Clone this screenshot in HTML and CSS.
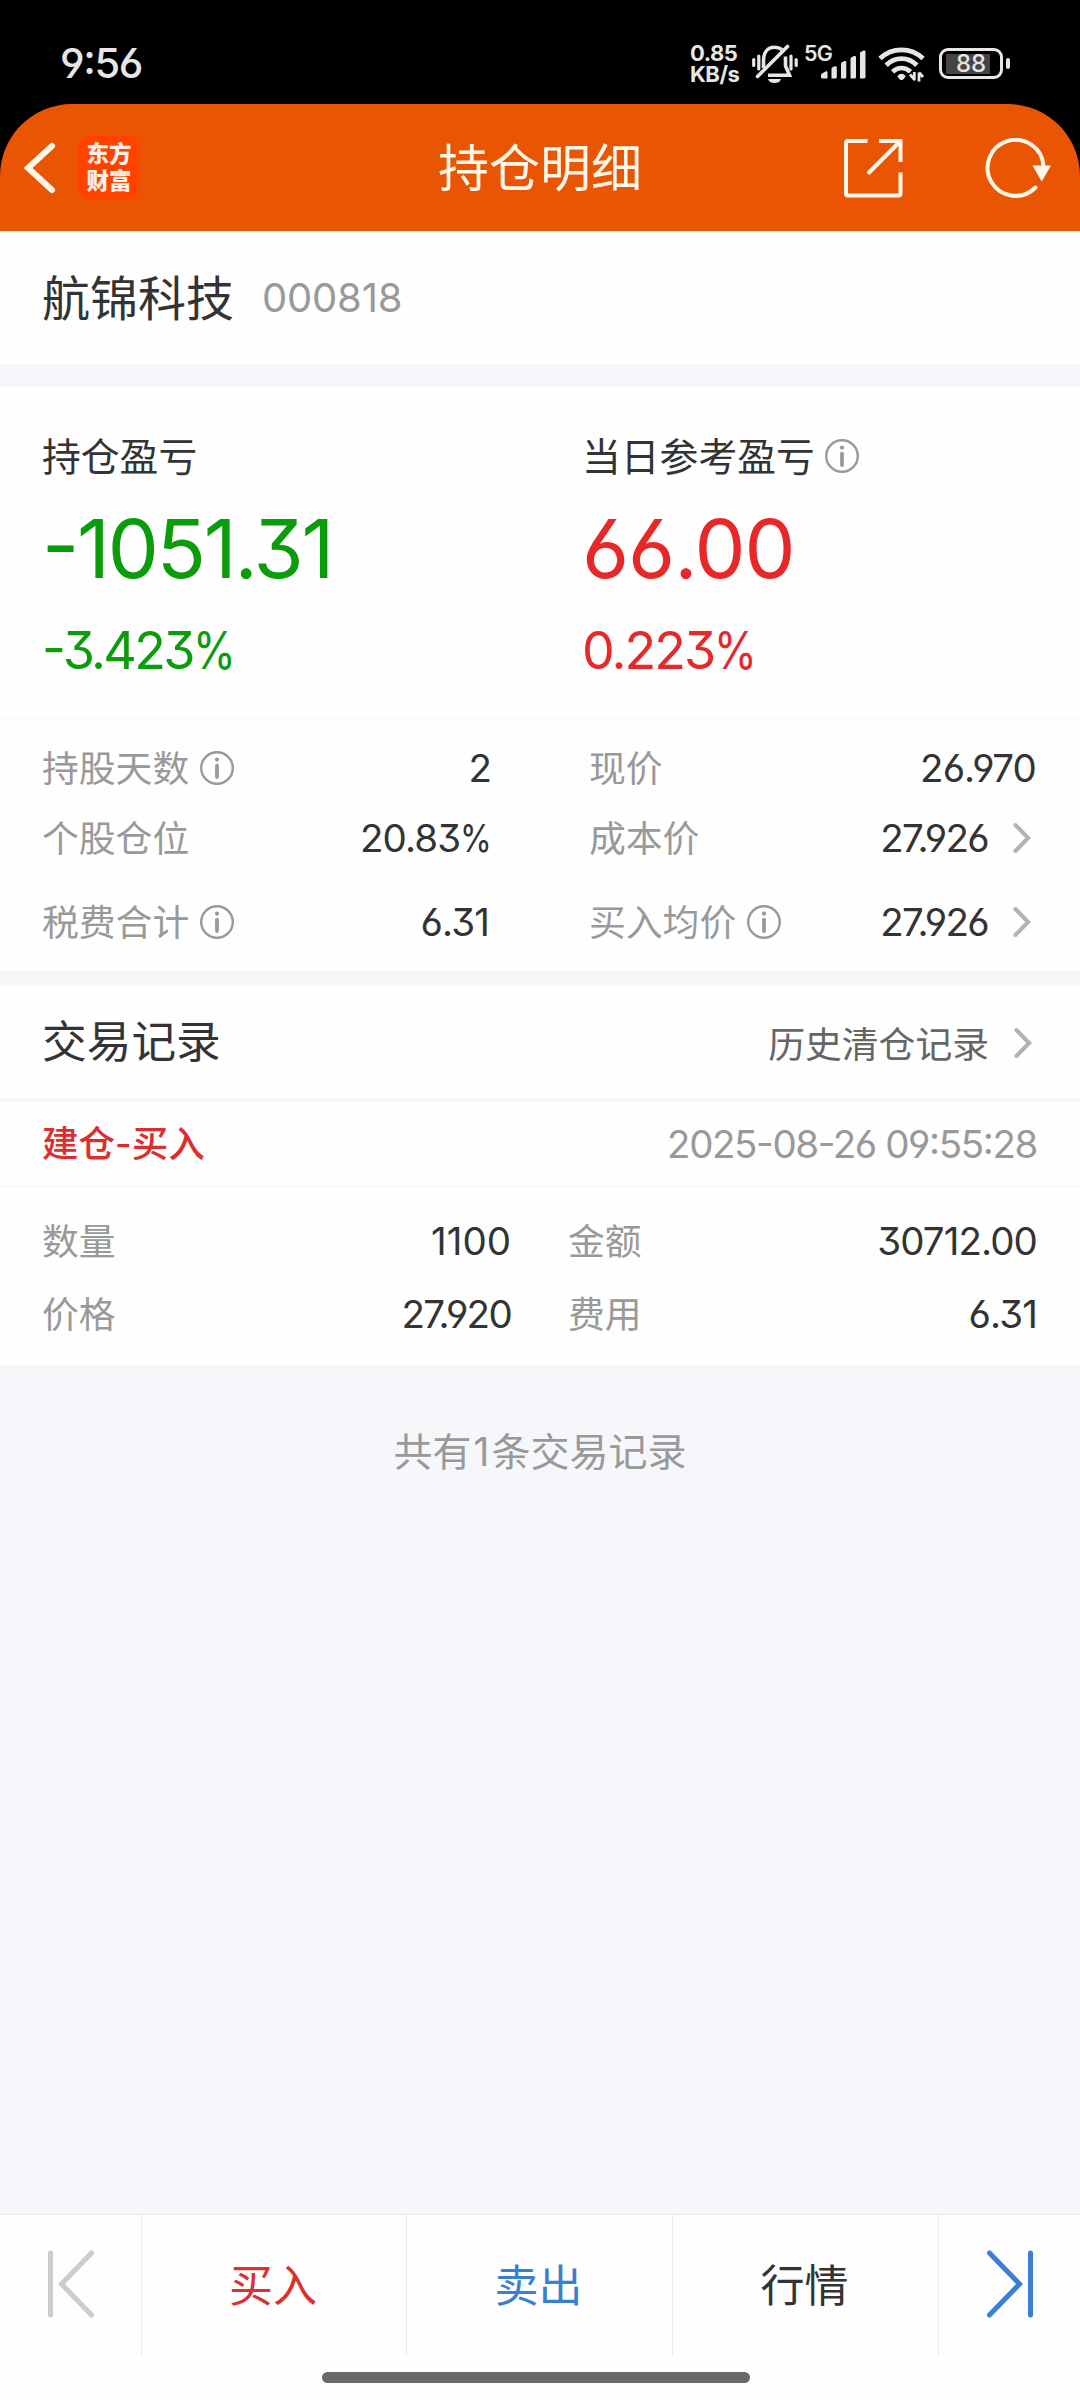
FILE: index.html
```html
<!DOCTYPE html>
<html lang="zh-CN">
<head>
<meta charset="utf-8">
<title>持仓明细</title>
<link rel="stylesheet" href="styles.css">
</head>
<body>
<svg class="defs" width="0" height="0" aria-hidden="true">
  <symbol id="info" viewBox="0 0 34 34">
    <circle cx="17" cy="17" r="15.8" fill="none" stroke="currentColor" stroke-width="2.4"/>
    <circle cx="17" cy="8.6" r="2.1" fill="currentColor"/>
    <path d="M17 14.6V26" fill="none" stroke="currentColor" stroke-width="3.8" stroke-linecap="round"/>
  </symbol>
  <symbol id="more" viewBox="0 0 18 32">
    <path d="M2.4 3L15.2 16L2.4 29" fill="none" stroke="currentColor" stroke-width="4" stroke-linecap="round" stroke-linejoin="miter"/>
  </symbol>
</svg>

<div class="status">
  <span class="clock">9:56</span>
  <div class="status-icons">
    <div class="speed"><span>0.85</span><span>KB/s</span></div>
    <svg class="bell" width="46" height="40" viewBox="0 0 46 40" fill="none" stroke="#e6e6e6" stroke-width="3.6">
      <path d="M11.500 24V17C11.500 8 16 3.200 22.500 3.200C25.500 3.200 28 4 30 5.600"/>
      <path d="M33.500 12.500V22L37.500 31.200H16"/>
      <path d="M5.500 32.500L35.500 2.500" stroke-linecap="round"/>
      <path d="M16 35H29C28 38 25.500 39 22.500 39S17 38 16 35Z" fill="#e6e6e6" stroke="none"/>
      <path d="M1.700 15.500V21.500M6.800 12V25M39 12V25M44.200 15.500V21.500" stroke-width="3.2" stroke-linecap="round"/>
    </svg>
    <div class="cell">
      <span class="gen">5G</span>
      <svg class="bars" width="46" height="30" viewBox="0 0 46 30" fill="#e6e6e6">
        <path d="M0 25Q0 24 1 23.500L5 21.300Q6.500 20.800 6.500 22V28.500H1.500Q0 28.500 0 27Z"/>
        <path d="M10.500 19Q10.500 17.500 12 17L14 16.200Q15.800 16 15.800 17.500V27Q15.800 28.500 14.300 28.500H10.500Z"/>
        <path d="M20 14Q20 12.500 21.500 12L23.500 11Q25.300 10.500 25.300 12V27Q25.300 28.500 23.800 28.500H20Z"/>
        <path d="M29.500 9Q29.500 7.500 31 7L33 6Q35 5.500 35 7V27Q35 28.500 33.500 28.500H29.500Z"/>
        <path d="M39 3.500Q39 2 40.500 1.500L42.500.500Q44.500 0 44.500 1.500V27Q44.500 28.500 43 28.500H39Z"/>
      </svg>
    </div>
    <svg class="wifi" width="48" height="38" viewBox="0 0 48 38" fill="none" stroke="#e6e6e6" stroke-width="4.8">
      <path d="M2 12.500C14 1 33 1 45 12.500"/>
      <path d="M8.200 19.200C17 10.500 30 10.500 38.800 19.200"/>
      <path d="M14.500 25.800C20 20.800 27 20.800 32.500 25.800"/>
      <path d="M19.300 30Q23.500 25.500 27.700 30L26 32.800Q23.500 35.500 21 32.800Z" fill="#e6e6e6" stroke="none"/>
      <path d="M32 28.500L36 33M36.300 26V34.500M41 26.500V35.500M41 26.500L45 31" stroke-width="2.800"/>
    </svg>
    <div class="battery"><span class="battery-body"><span class="battery-num">88</span></span><span class="battery-tip"></span></div>
  </div>
</div>

<header class="nav">
  <div class="nav-left">
    <svg width="34" height="52" viewBox="0 0 34 52" fill="none" stroke="#fff7ea" stroke-width="6" stroke-linecap="round"><path d="M29 4L5 26L29 48"/></svg>
    <div class="logo"><span>东方</span><span>财富</span></div>
  </div>
  <h1 class="title">持仓明细</h1>
  <div class="nav-right">
    <svg width="60" height="60" viewBox="0 0 60 60" fill="none" stroke="#fff7ea" stroke-width="4">
      <path d="M24.500 3H5Q3 3 3 5V55.500Q3 57.500 5 57.500H55.500Q57.500 57.500 57.500 55.500V34.500"/>
      <path d="M36 3H57.500V24"/>
      <path d="M57 3.500L26 34.500" stroke-linecap="round"/>
    </svg>
    <svg width="68" height="60" viewBox="0 0 68 60" fill="none" stroke="#fff7ea" stroke-width="4">
      <path d="M51.500 49.500A28 28 0 1 1 59.500 28" stroke-linecap="round"/>
      <path d="M48.500 27.500H67L57.700 43.500Z" fill="#fff7ea" stroke="none"/>
    </svg>
  </div>
</header>

<section class="stock">
  <span class="stock-name">航锦科技</span><span class="stock-code">000818</span>
</section>

<section class="profit">
  <div class="profit-col down">
    <div class="profit-label zh">持仓盈亏</div>
    <div class="profit-value t-total">-1051.31</div>
    <div class="profit-rate t-rate">-3.423<span class="pct">%</span></div>
  </div>
  <div class="profit-col up">
    <div class="profit-label zh">当日参考盈亏<svg class="info"><use href="#info"/></svg></div>
    <div class="profit-value t-day">66.00</div>
    <div class="profit-rate t-day-rate">0.223<span class="pct">%</span></div>
  </div>
</section>

<section class="facts">
  <div class="fact"><span class="label zh">持股天数</span><svg class="info"><use href="#info"/></svg><span class="value">2</span></div>
  <div class="fact"><span class="label zh">现价</span><span class="value">26.970</span></div>
  <div class="fact"><span class="label zh">个股仓位</span><span class="value">20.83<span class="pct">%</span></span></div>
  <div class="fact"><span class="label zh">成本价</span><span class="value tight">27.926</span><svg class="more"><use href="#more"/></svg></div>
  <div class="fact"><span class="label zh">税费合计</span><svg class="info"><use href="#info"/></svg><span class="value fee">6.31</span></div>
  <div class="fact"><span class="label zh">买入均价</span><svg class="info"><use href="#info"/></svg><span class="value tight">27.926</span><svg class="more"><use href="#more"/></svg></div>
</section>

<section class="records-head">
  <h2 class="records-title zh">交易记录</h2>
  <span class="history">历史清仓记录</span><svg class="more"><use href="#more"/></svg>
</section>

<section class="record">
  <div class="record-head"><span class="record-type zh">建仓<i class="dash">-</i>买入</span><time class="record-time">2025-08-26 09:55:28</time></div>
  <div class="record-body">
    <div class="fact"><span class="label zh">数量</span><span class="value loose">1100</span></div>
    <div class="fact"><span class="label zh">金额</span><span class="value">30712.00</span></div>
    <div class="fact"><span class="label zh">价格</span><span class="value tight">27.920</span></div>
    <div class="fact"><span class="label zh">费用</span><span class="value">6.31</span></div>
  </div>
</section>

<main class="rest"><p class="count">共有<span class="num">1</span>条交易记录</p></main>

<footer class="bottom">
  <nav class="tabs">
    <div class="tab"><svg width="48" height="68" viewBox="0 0 48 68" fill="none" stroke="#ccc" stroke-width="5" stroke-linecap="round"><path d="M3.500 3V65M44.500 3L14.500 34L44.500 65"/></svg></div>
    <div class="tab buy">买入</div>
    <div class="tab sell">卖出</div>
    <div class="tab quote">行情</div>
    <div class="tab"><svg width="48" height="68" viewBox="0 0 48 68" fill="none" stroke="#3b7fd4" stroke-width="5" stroke-linecap="round"><path d="M44.500 3V65M3.500 3L33.500 34L3.500 65"/></svg></div>
  </nav>
  <div class="home"></div>
</footer>
</body>
</html>
```
FILE: styles.css
```css
* { box-sizing: border-box; margin: 0; padding: 0; }

body {
  width: 1080px;
  height: 2400px;
  display: flex;
  flex-direction: column;
  background: #fefefe;
  color: #333;
  font-family: Inter, "Noto Sans CJK SC", sans-serif;
  font-feature-settings: "cv03", "cv04", "cv09", "case";
  line-height: 1;
  overflow: hidden;
}
svg { display: block; flex: none; }
.defs { position: absolute; }
.zh { font-family: "Noto Sans CJK SC", sans-serif; padding-bottom: .07em; }

/* status bar */
.status {
  height: 190px;
  flex: none;
  margin-bottom: -86px;
  background: #000;
  color: #e6e6e6;
  display: flex;
  justify-content: space-between;
  padding: 43px 70px 0 60px;
}
.clock { font-size: 41.500px; font-weight: 500; letter-spacing: -1.400px; }
.status-icons { display: flex; }
.speed { width: 62px; display: flex; flex-direction: column; font-size: 22px; font-weight: 650; letter-spacing: -.5px; line-height: 21px; }
.bell { margin-top: 1px; }
.cell { width: 74px; display: grid; margin-left: 6px; }
.gen { grid-area: 1 / 1; font-size: 21.500px; font-weight: 600; letter-spacing: -.8px; line-height: 21px; }
.bars { grid-area: 1 / 1; margin: 7px 0 0 17px; }
.wifi { margin-top: 3px; }
.battery { display: flex; align-items: center; height: 31px; margin: 5px 0 0 13px; gap: 3px; }
.battery-body {
  width: 64px; height: 31px; border: 3px solid #e6e6e6; border-radius: 9px;
  background: linear-gradient(#444, #444) 4px 3px / 44px 20px no-repeat;
  display: flex; align-items: center; justify-content: center;
}
.battery-num { font-size: 24px; font-weight: 550; }
.battery-tip { width: 4px; height: 11px; border-radius: 2px; background: #e6e6e6; }

/* title bar */
.nav {
  height: 127px;
  flex: none;
  background: #ea5504;
  border-radius: 72px 72px 0 0;
  display: grid;
  grid-template-columns: 1fr auto 1fr;
  align-items: center;
  padding: 0 28px 0 23px;
}
.nav-left, .nav-right { display: flex; align-items: center; }
.nav-left { gap: 21px; }
.nav-right { justify-content: flex-end; gap: 81px; }
.logo {
  width: 62px; height: 63px; border-radius: 13px; background: #ff4200; color: #fff0e8;
  display: flex; flex-direction: column; align-items: center; justify-content: center;
  font: 900 22.500px/27px "Noto Sans CJK SC", sans-serif;
  padding-bottom: 4px;
}
.title { font: 400 51px/1 "Noto Sans CJK SC", sans-serif; color: #fff7ea; padding-bottom: 5px; margin-right: -5px; }

/* stock */
.stock { height: 133px; flex: none; display: flex; align-items: center; padding: 0 42px; }
.stock-name { font: 400 48px/1 "Noto Sans CJK SC", sans-serif; padding-bottom: 6px; }
.stock-code { margin-left: 28px; font-size: 40px; letter-spacing: -.2px; color: #999; }

/* profit */
.profit {
  height: 355px; flex: none;
  border-top: 23px solid #f6f7fa;
  border-bottom: 1px solid #f3f4f6;
  display: grid; grid-template-columns: 1fr 1fr;
}
.profit-col { padding: 48px 0 0 42px; }
.profit-label { font-size: 38.800px; height: 41px; display: flex; align-items: center; color: #333; }
.profit-label .info { margin: 3px 0 0 10px; }
.profit-value { font-size: 81px; margin-top: 33px; }
.profit-rate { font-size: 52px; margin-top: 35px; }
.down { color: #0a9c0a; }
.up { color: #e82828; }
.t-total { letter-spacing: -2.200px; }
.t-day { letter-spacing: -1px; }
.t-rate { letter-spacing: -2.700px; }
.t-day-rate { letter-spacing: -2px; }
.pct { display: inline-block; transform: scaleX(.84); transform-origin: 0 50%; margin-right: -.16em; }

.info { width: 34px; height: 34px; color: #999; }
.more { width: 18px; height: 32px; color: #b2b2b2; }

/* label / value rows */
.facts {
  height: 266px; flex: none;
  display: grid;
  grid-template-columns: 448px 446px;
  grid-template-rows: 70px 70px 98px;
  column-gap: 99px;
  padding: 14px 44px 0 43px;
  border-bottom: 14px solid #f6f7fa;
}
.fact { display: flex; align-items: center; font-size: 36.800px; }
.fact .info { margin-left: 11px; }
.label { color: #999; margin-left: -1px; }
.value { margin-left: auto; font-size: 38.500px; font-weight: 400; letter-spacing: -.9px; padding-top: 1px; }
.tight { letter-spacing: -1.700px; }
.loose { letter-spacing: 0; }
.fee { margin-right: 2px; }
.fact .more, .records-head .more { margin: 0 5px 0 25px; }

/* trade records */
.records-head {
  height: 117px; flex: none; display: flex; align-items: center; padding: 0 43px 0 42px;
  border-bottom: 4px solid #f6f7fa;
}
.records-title { font-size: 44.700px; font-weight: 400; margin-right: auto; padding-bottom: 5px; }
.history { font: 400 36.800px/1 "Noto Sans CJK SC", sans-serif; color: #666; margin-top: 2px; }
.records-head .more { margin-top: 3px; }
.record { flex: none; height: 263px; }
.record-head {
  height: 85px; display: flex; align-items: center; justify-content: space-between;
  padding: 0 43px 0 42px; border-bottom: 1px solid #f3f4f6;
}
.record-type { font-size: 36.500px; font-weight: 500; color: #dc2e2e; }
.dash { font: 500 36px/1 Inter, sans-serif; }
.record-time { font-size: 38.500px; letter-spacing: -1.400px; color: #999; padding-top: 1px; }
.record-body {
  display: grid; grid-template-columns: 468px 468px; grid-template-rows: 73px 73px;
  column-gap: 58px; padding: 17px 43px 0;
}

.rest { flex: 1; background: #f6f7fa; }
.count { text-align: center; padding-top: 65px; font: 400 39px/1 "Noto Sans CJK SC", sans-serif; color: #999; }
.num { font-family: Inter, sans-serif; margin: 0 2px; }

/* bottom bar */
.bottom { height: 186px; flex: none; border-top: 1px solid #ebebeb; }
.tabs { height: 141px; display: grid; grid-template-columns: 141px 265px 266px 266px 142px; }
.tab { display: flex; align-items: center; justify-content: center; font: 400 44px/1 "Noto Sans CJK SC", sans-serif; padding: 0 2px 6px 0; }
.tab:first-child, .tab:last-child { padding-right: 0; }
.tab + .tab { border-left: 1px solid #ebebeb; }
.tab svg { margin-top: 2px; }
.buy { color: #d93030; }
.sell { color: #3b7fd4; }
.home { width: 428px; height: 11px; margin: 16px 0 0 322px; border-radius: 6px; background: #696969; }
```
